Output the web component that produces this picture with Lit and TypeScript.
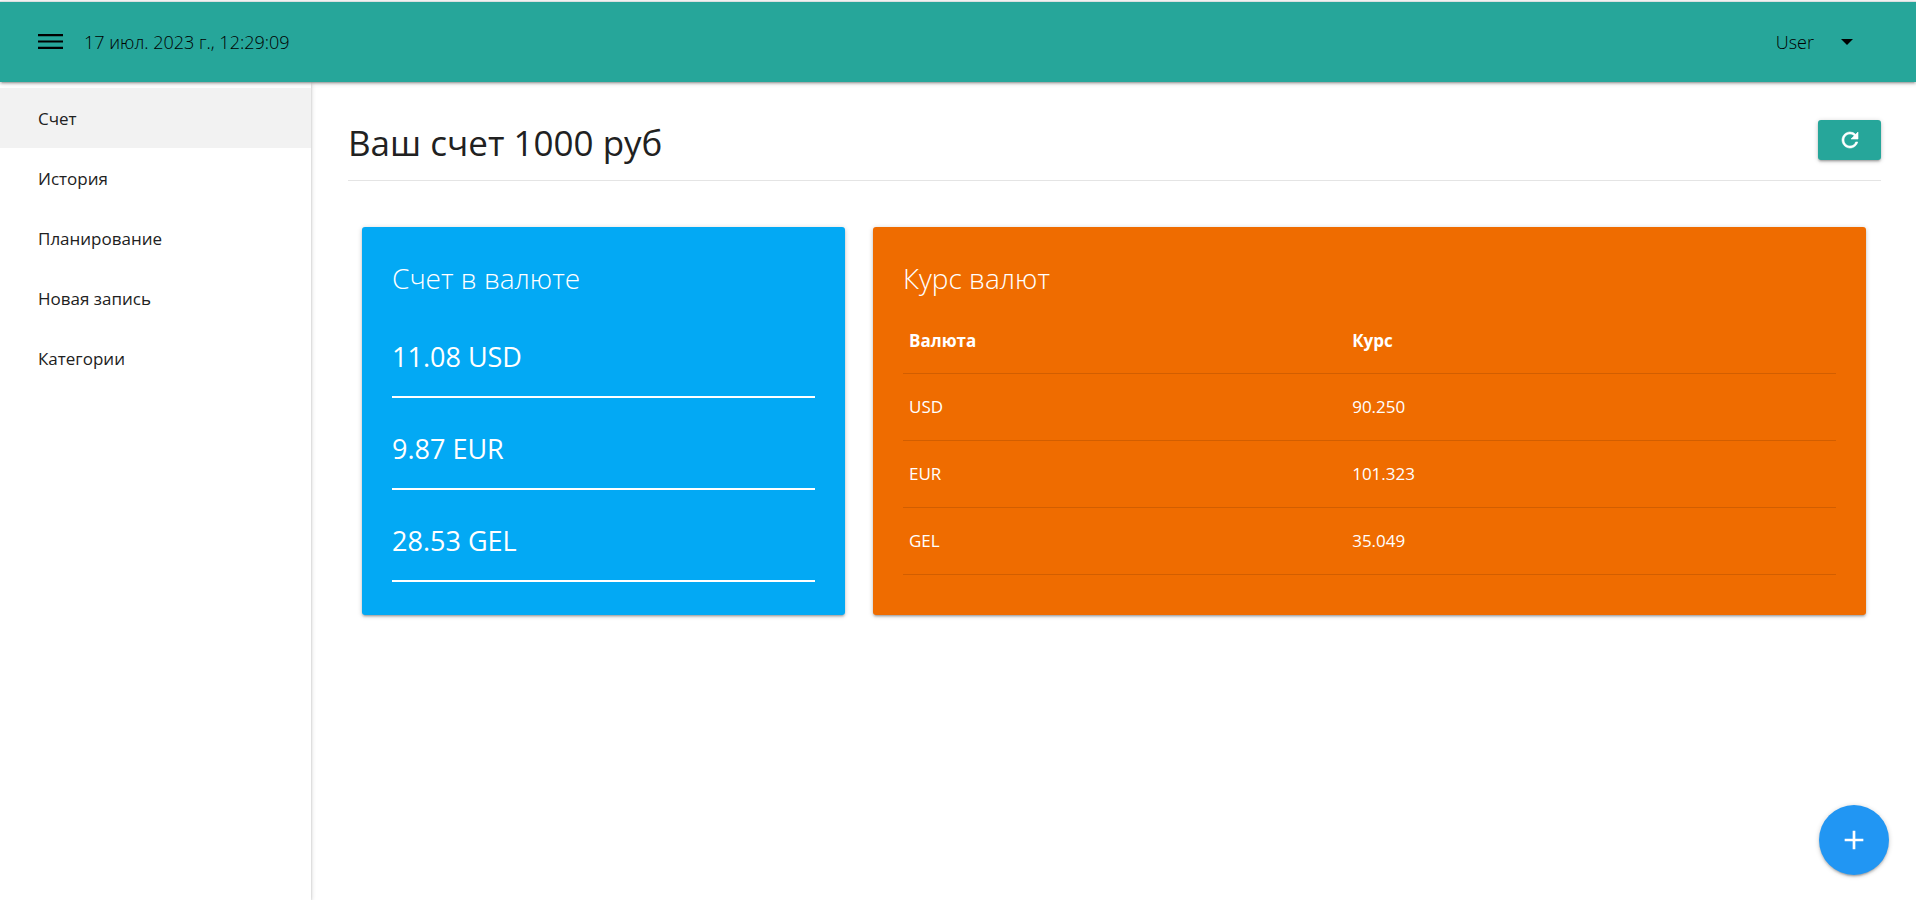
import { LitElement, html, css } from "lit";
import { customElement, state } from "lit/decorators.js";

interface Rate {
  code: string;
  amount: string;
  rate: string;
}

@customElement("app-root")
export class AppRoot extends LitElement {
  static styles = css`
    :host {
      display: block;
      min-height: 100vh;
      background: #fff;
      color: #212121;
      font-family: "Open Sans", "Noto Sans", sans-serif;
      font-size: 17px;
      line-height: 26px;
    }
    * {
      box-sizing: border-box;
    }
    .page {
      display: flex;
      flex-direction: column;
      min-height: 100vh;
      padding-top: 1px;
    }
    .navbar {
      display: flex;
      align-items: center;
      justify-content: space-between;
      height: 81px;
      padding: 0 63px 0 38px;
      border-top: 1px solid #dadfe0;
      background: #26a69a;
      color: #000;
      font-size: 18px;
      font-weight: 300;
      box-shadow: 0 2px 2px 0 rgba(0, 0, 0, 0.14), 0 3px 1px -2px rgba(0, 0, 0, 0.12),
        0 1px 5px 0 rgba(0, 0, 0, 0.2);
      z-index: 2;
    }
    .nav-left {
      display: flex;
      align-items: center;
      gap: 21px;
    }
    button {
      border: 0;
      padding: 0;
      background: none;
      color: inherit;
      font: inherit;
      cursor: pointer;
    }
    svg {
      display: block;
      fill: currentColor;
    }
    .user {
      display: flex;
      align-items: center;
      gap: 27px;
    }
    .body {
      display: flex;
      flex: 1;
    }
    .sidebar {
      flex: 0 0 311px;
      padding-top: 6px;
      box-shadow: 0 2px 2px 0 rgba(0, 0, 0, 0.14), 0 3px 1px -2px rgba(0, 0, 0, 0.12),
        0 1px 5px 0 rgba(0, 0, 0, 0.2);
    }
    .menu {
      list-style: none;
      margin: 0;
      padding: 0;
    }
    .menu-link {
      display: block;
      padding: 2px 38px 0;
      color: #212121;
      font-weight: 500;
      line-height: 58px;
      text-decoration: none;
    }
    .menu-link.active {
      background: #f2f2f2;
    }
    .content {
      flex: 1;
      min-width: 0;
      padding: 38px 35px 0 37px;
    }
    .page-title {
      display: flex;
      align-items: flex-start;
      justify-content: space-between;
      height: 61px;
      border-bottom: 1px solid #e4e4e4;
    }
    .heading {
      margin: 0;
      font-size: 35px;
      font-weight: 400;
      line-height: 46px;
    }
    .refresh {
      display: grid;
      place-items: center;
      width: 63px;
      height: 40px;
      border-radius: 3px;
      background: #26a69a;
      color: #fff;
    }
    .refresh svg {
      stroke: currentColor;
      stroke-width: 0.6;
    }
    .refresh,
    .card,
    .fab {
      box-shadow: 0 2px 2px 0 rgba(0, 0, 0, 0.14), 0 3px 1px -2px rgba(0, 0, 0, 0.12),
        0 1px 5px 0 rgba(0, 0, 0, 0.2);
    }
    .cards {
      display: grid;
      grid-template-columns: 483fr 993fr;
      gap: 28px;
      padding: 46px 15px 0 14px;
    }
    .card {
      padding: 30px 30px 33px;
      border-radius: 3px;
      color: #fff;
    }
    .bill {
      background: #03a9f4;
    }
    .rates {
      background: #ef6c00;
    }
    .card-title {
      margin: 0 0 7px;
      font-size: 28px;
      font-weight: 300;
      line-height: 42px;
    }
    .amounts {
      list-style: none;
      margin: 0;
      padding: 0;
    }
    .amount {
      height: 92px;
      padding-top: 31px;
      border-bottom: 2px solid #fff;
      font-size: 27px;
      line-height: 40px;
    }
    table {
      width: 100%;
      border-collapse: collapse;
      table-layout: fixed;
    }
    th,
    td {
      height: 67px;
      padding: 0 6px;
      border-bottom: 1px solid rgba(0, 0, 0, 0.12);
      text-align: left;
    }
    th {
      padding-top: 4px;
      font-weight: 700;
    }
    .col-code {
      width: 47.5%;
    }
    .fab {
      position: fixed;
      right: 27px;
      bottom: 25px;
      display: grid;
      place-items: center;
      width: 70px;
      height: 70px;
      border-radius: 50%;
      background: #2196f3;
      color: #fff;
    }
  `;

  @state() private active = 0;

  private menu = ["Счет", "История", "Планирование", "Новая запись", "Категории"];

  private rates: Rate[] = [
    { code: "USD", amount: "11.08", rate: "90.250" },
    { code: "EUR", amount: "9.87", rate: "101.323" },
    { code: "GEL", amount: "28.53", rate: "35.049" },
  ];

  private select(e: Event, i: number) {
    e.preventDefault();
    this.active = i;
  }

  render() {
    return html`
      <div class="page">
        <header class="navbar">
          <div class="nav-left">
            <button aria-label="Меню">
              <svg width="25" height="16" viewBox="0 0 25 16">
                <path d="M0 0h25v2.2H0zM0 6.4h25v2.2H0zM0 12.8h25V15H0z" />
              </svg>
            </button>
            <span>17 июл. 2023 г., 12:29:09</span>
          </div>
          <button class="user">
            User
            <svg width="12" height="6" viewBox="0 0 12 6"><path d="M0 0h12L6 6z" /></svg>
          </button>
        </header>
        <div class="body">
          <nav class="sidebar">
            <ul class="menu">
              ${this.menu.map(
                (label, i) => html`<li>
                  <a
                    class="menu-link ${i === this.active ? "active" : ""}"
                    href="#"
                    @click=${(e: Event) => this.select(e, i)}
                    >${label}</a
                  >
                </li>`
              )}
            </ul>
          </nav>
          <main class="content">
            <div class="page-title">
              <h1 class="heading">Ваш счет 1000 руб</h1>
              <button class="refresh" aria-label="Обновить">
                <svg width="24" height="24" viewBox="0 0 24 24">
                  <path
                    d="M17.65 6.35A7.958 7.958 0 0 0 12 4c-4.42 0-7.99 3.58-7.99 8s3.57 8 7.99 8c3.73 0 6.84-2.55 7.73-6h-2.08A5.99 5.99 0 0 1 12 18c-3.31 0-6-2.69-6-6s2.69-6 6-6c1.66 0 3.14.69 4.22 1.78L13 11h7V4l-2.35 2.35z"
                  />
                </svg>
              </button>
            </div>
            <div class="cards">
              <section class="card bill">
                <h2 class="card-title">Счет в валюте</h2>
                <ul class="amounts">
                  ${this.rates.map((r) => html`<li class="amount">${r.amount} ${r.code}</li>`)}
                </ul>
              </section>
              <section class="card rates">
                <h2 class="card-title">Курс валют</h2>
                <table>
                  <thead>
                    <tr>
                      <th class="col-code" scope="col">Валюта</th>
                      <th scope="col">Курс</th>
                    </tr>
                  </thead>
                  <tbody>
                    ${this.rates.map(
                      (r) => html`<tr>
                        <td>${r.code}</td>
                        <td>${r.rate}</td>
                      </tr>`
                    )}
                  </tbody>
                </table>
              </section>
            </div>
          </main>
        </div>
        <button class="fab" aria-label="Добавить запись">
          <svg width="32" height="32" viewBox="0 0 24 24">
            <path d="M19 13h-6v6h-2v-6H5v-2h6V5h2v6h6v2z" />
          </svg>
        </button>
      </div>
    `;
  }
}
